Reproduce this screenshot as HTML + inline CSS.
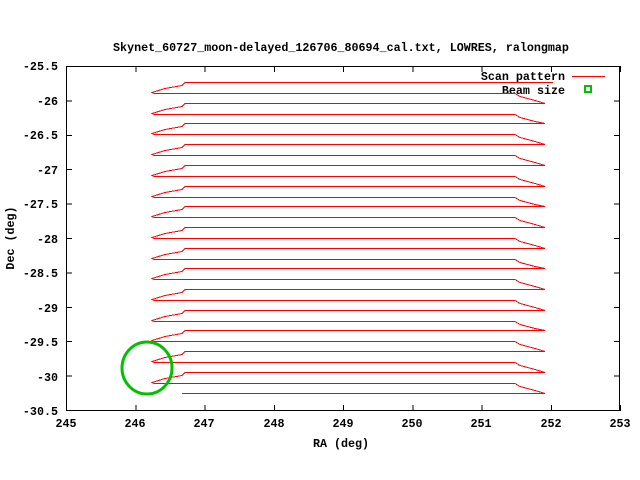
<!DOCTYPE html>
<html><head><style>
html,body{margin:0;padding:0;background:#fff;width:640px;height:480px;overflow:hidden}
svg text{font-family:"Liberation Mono",monospace;font-weight:bold;font-size:11.7px;fill:#000}
</style></head><body>
<svg id="s" width="640" height="480" viewBox="0 0 640 480" xmlns="http://www.w3.org/2000/svg">
<text x="341" y="51" text-anchor="middle">Skynet_60727_moon-delayed_126706_80694_cal.txt, LOWRES, ralongmap</text>
<g text-anchor="end">
<text x="58" y="70">-25.5</text>
<text x="58" y="105">-26</text>
<text x="58" y="139">-26.5</text>
<text x="58" y="174">-27</text>
<text x="58" y="208">-27.5</text>
<text x="58" y="243">-28</text>
<text x="58" y="277">-28.5</text>
<text x="58" y="312">-29</text>
<text x="58" y="346">-29.5</text>
<text x="58" y="381">-30</text>
<text x="58" y="415">-30.5</text>
</g>
<g text-anchor="middle">
<text x="66" y="427">245</text>
<text x="135" y="427">246</text>
<text x="204" y="427">247</text>
<text x="274" y="427">248</text>
<text x="343" y="427">249</text>
<text x="412" y="427">250</text>
<text x="481" y="427">251</text>
<text x="551" y="427">252</text>
<text x="620" y="427">253</text>
<text x="341" y="447">RA (deg)</text>
<text transform="translate(14,238) rotate(-90)">Dec (deg)</text>
</g>
<text x="565" y="80" text-anchor="end">Scan pattern</text>
<text x="565" y="94" text-anchor="end">Beam size</text>
<rect x="572" y="76" width="33" height="1" fill="#f00"/>
<rect x="585" y="86" width="6" height="6" fill="none" stroke="#00c000" stroke-width="2"/>
<g id="ticks" stroke="#000" stroke-width="1" shape-rendering="crispEdges"></g>
<rect x="66.5" y="66.5" width="553" height="344" fill="none" stroke="#000" stroke-width="1" shape-rendering="crispEdges"/>
<g id="hl" fill="#ff0000"></g>
<path id="scan" fill="none" stroke="#ff0000" stroke-width="1" shape-rendering="crispEdges"/>
<ellipse cx="147" cy="368" rx="25" ry="26" fill="none" stroke="#00c000" stroke-width="3"/>
</svg>
<script>
var t='';
for(var i=0;i<=8;i++){var x=66.5+i*69.25;t+='<line x1="'+x+'" y1="411" x2="'+x+'" y2="405"/><line x1="'+x+'" y1="66" x2="'+x+'" y2="72"/>';}
for(var j=0;j<=10;j++){var y=66.5+j*34.4;t+='<line x1="66" y1="'+y+'" x2="72" y2="'+y+'"/><line x1="620" y1="'+y+'" x2="614" y2="'+y+'"/>';}
document.getElementById('ticks').innerHTML=t;
var d='', h='';
function hr(x1,x2,y){h+='<rect x="'+x1+'" y="'+y+'" width="'+(x2-x1)+'" height="1"/>';}
hr(185,553,82);
for(var k=0;k<15;k++){
 var u=Math.round(82+k*20.7), l=u+11;
 if(k>0) hr(185,545,u);
 hr(154,515,l);
 d+=' M185 '+(u+0.5)+' L182 '+(u+3.5)+' L165 '+(u+6.5)+' L152 '+(l-0.5)+' L154 '+(l+0.5);
 var nu=(k<14)?Math.round(82+(k+1)*20.7):393;
 d+=' M515 '+(l+0.5)+' L520 '+(l+3.5)+' L535 '+(l+7.5)+' L545 '+(nu+0.5);
}
hr(182,545,393);
document.getElementById('hl').innerHTML=h;
document.getElementById('scan').setAttribute('d',d);
</script>
</body></html>
